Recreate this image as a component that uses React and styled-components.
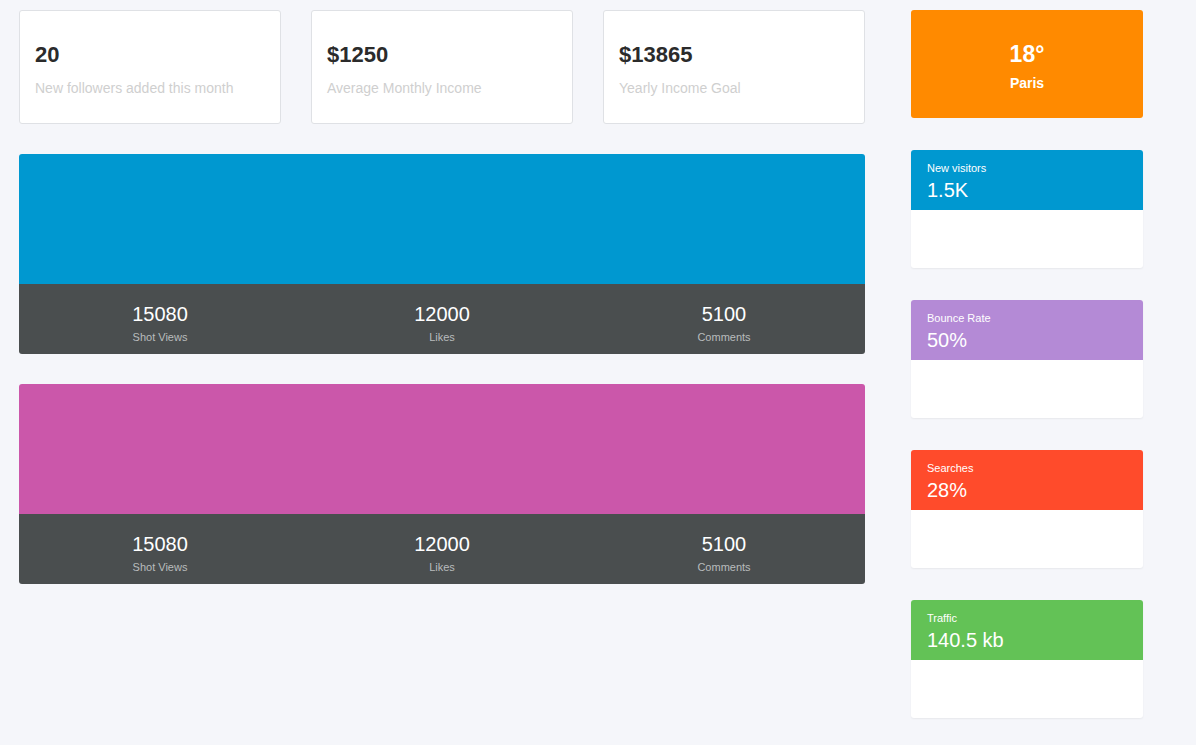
import React from 'react';
import styled, { createGlobalStyle } from 'styled-components';

const GlobalStyle = createGlobalStyle`
  html, body {
    margin: 0;
    background: #f5f6fa;
    font-family: "Liberation Sans", Arial, sans-serif;
  }
`

const Page = styled.div`
  display: grid;
  grid-template-columns: 846px 232px;
  column-gap: 46px;
  padding: 10px 19px;
  align-items: start;
`

const Main = styled.div`
  display: flex;
  flex-direction: column;
  gap: 30px;
`

const StatRow = styled.div`
  display: grid;
  grid-template-columns: repeat(3, 262px);
  column-gap: 30px;
`

const StatCard = styled.div`
  box-sizing: border-box;
  height: 114px;
  background: #fff;
  border: 1px solid #dfe1e5;
  border-radius: 3px;
  padding: 31px 15px 0;
`

const StatValue = styled.div`
  font-size: 22px;
  font-weight: bold;
  color: #2b2b2b;
  line-height: 26px;
`

const StatLabel = styled.div`
  margin-top: 11px;
  font-size: 14px;
  color: #cfcfcf;
  line-height: 18px;
`

const ChartCard = styled.div`
  height: 200px;
  border-radius: 3px;
  overflow: hidden;
  display: flex;
  flex-direction: column;
`

const ChartArea = styled.div`
  height: 130px;
  background: ${p => p.color};
`

const ChartFooter = styled.div`
  flex: 1;
  background: #4a4e4f;
  display: grid;
  grid-template-columns: repeat(3, 1fr);
  align-items: center;
  padding-top: 8px;
`

const FooterItem = styled.div`
  text-align: center;
`

const FooterValue = styled.div`
  color: #fff;
  font-size: 20px;
  line-height: 24px;
`

const FooterLabel = styled.div`
  color: #b9bcbd;
  font-size: 11px;
  line-height: 14px;
  margin-top: 4px;
`

const Side = styled.div`
  display: flex;
  flex-direction: column;
  gap: 32px;
`

const Weather = styled.div`
  height: 108px;
  box-sizing: border-box;
  padding-top: 4px;
  background: #ff8a00;
  border-radius: 3px;
  color: #fff;
  display: flex;
  flex-direction: column;
  align-items: center;
  justify-content: center;
`

const Temp = styled.div`
  font-size: 23px;
  font-weight: bold;
  line-height: 28px;
`

const City = styled.div`
  font-size: 14px;
  font-weight: bold;
  line-height: 18px;
  margin-top: 6px;
`

const InfoCard = styled.div`
  height: 118px;
  background: #fff;
  border-radius: 3px;
  overflow: hidden;
  box-shadow: 0 1px 2px rgba(0, 0, 0, 0.06);
`

const InfoHead = styled.div`
  height: 60px;
  box-sizing: border-box;
  background: ${p => p.color};
  color: #fff;
  padding: 11px 16px 0;
`

const InfoTitle = styled.div`
  font-size: 11px;
  line-height: 14px;
`

const InfoValue = styled.div`
  font-size: 20px;
  line-height: 24px;
  margin-top: 3px;
`

const stats = [
  { value: '20', label: 'New followers added this month' },
  { value: '$1250', label: 'Average Monthly Income' },
  { value: '$13865', label: 'Yearly Income Goal' },
]

const footer = [
  { value: '15080', label: 'Shot Views' },
  { value: '12000', label: 'Likes' },
  { value: '5100', label: 'Comments' },
]

const infos = [
  { title: 'New visitors', value: '1.5K', color: '#0098d0' },
  { title: 'Bounce Rate', value: '50%', color: '#b48ad6' },
  { title: 'Searches', value: '28%', color: '#ff4b2b' },
  { title: 'Traffic', value: '140.5 kb', color: '#63c256' },
]

export default function App() {
  return (
    <>
      <GlobalStyle />
      <Page>
        <Main>
          <StatRow>
            {stats.map(s => (
              <StatCard key={s.label}>
                <StatValue>{s.value}</StatValue>
                <StatLabel>{s.label}</StatLabel>
              </StatCard>
            ))}
          </StatRow>
          {['#0098d0', '#cb57aa'].map(c => (
            <ChartCard key={c}>
              <ChartArea color={c} />
              <ChartFooter>
                {footer.map(f => (
                  <FooterItem key={f.label}>
                    <FooterValue>{f.value}</FooterValue>
                    <FooterLabel>{f.label}</FooterLabel>
                  </FooterItem>
                ))}
              </ChartFooter>
            </ChartCard>
          ))}
        </Main>
        <Side>
          <Weather>
            <Temp>18°</Temp>
            <City>Paris</City>
          </Weather>
          {infos.map(i => (
            <InfoCard key={i.title}>
              <InfoHead color={i.color}>
                <InfoTitle>{i.title}</InfoTitle>
                <InfoValue>{i.value}</InfoValue>
              </InfoHead>
            </InfoCard>
          ))}
        </Side>
      </Page>
    </>
  );
}
